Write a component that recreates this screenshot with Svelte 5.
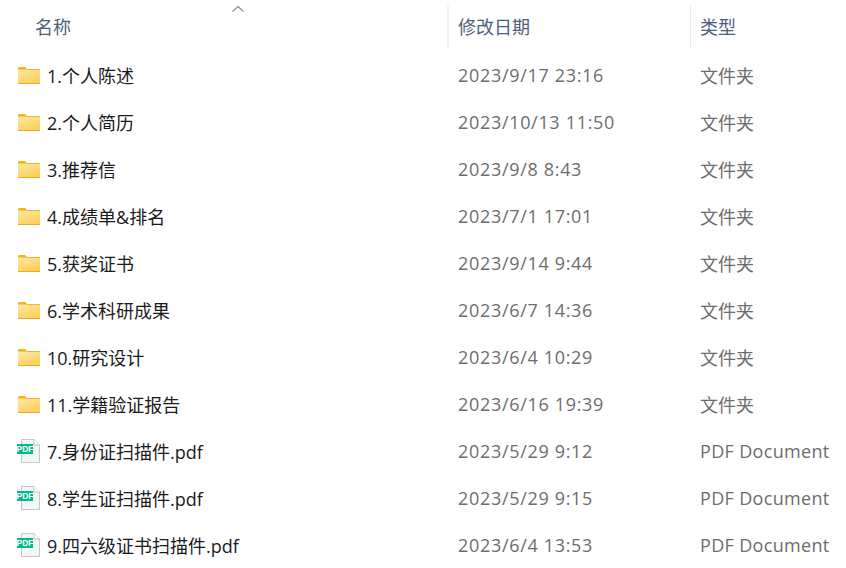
<script>
  const folder = '文件夹';
  const pdf = 'PDF Document';
  const rows = [
    { name: '1.个人陈述', date: '2023/9/17 23:16', type: folder },
    { name: '2.个人简历', date: '2023/10/13 11:50', type: folder },
    { name: '3.推荐信', date: '2023/9/8 8:43', type: folder },
    { name: '4.成绩单&排名', date: '2023/7/1 17:01', type: folder },
    { name: '5.获奖证书', date: '2023/9/14 9:44', type: folder },
    { name: '6.学术科研成果', date: '2023/6/7 14:36', type: folder },
    { name: '10.研究设计', date: '2023/6/4 10:29', type: folder },
    { name: '11.学籍验证报告', date: '2023/6/16 19:39', type: folder },
    { name: '7.身份证扫描件.pdf', date: '2023/5/29 9:12', type: pdf },
    { name: '8.学生证扫描件.pdf', date: '2023/5/29 9:15', type: pdf },
    { name: '9.四六级证书扫描件.pdf', date: '2023/6/4 13:53', type: pdf }
  ];
</script>

<div class="list">
  <div class="head">
    <div class="hname">
      <span>名称</span>
      <svg class="sort" width="14" height="8" viewBox="0 0 14 8"><path d="M1.5 6.5 7 1.5l5.5 5" fill="none" stroke="#8b8b8b" stroke-width="1.1"/></svg>
    </div>
    <div class="hdate">修改日期</div>
    <div class="htype">类型</div>
  </div>
  {#each rows as r}
    <div class="row">
      <div class="name">
        {#if r.type === folder}
          <svg class="ico" width="24" height="20" viewBox="0 0 24 20">
            <defs>
              <linearGradient id="fg" x1="0" y1="0" x2="0.6" y2="1">
                <stop offset="0" stop-color="#ffe9a6"/>
                <stop offset="1" stop-color="#fdcf5b"/>
              </linearGradient>
            </defs>
            <path d="M1 3.500C1 2.700 1.600 2 2.400 2H8l2.200 2H23v2H1z" fill="#f8b511"/>
            <rect x="1" y="4.600" width="22" height="13.400" fill="url(#fg)"/>
            <rect x="1" y="18" width="22" height="1" fill="#e9ab2e"/>
            <rect x="10" y="4" width="13" height="1" fill="#e7b53f"/>
          </svg>
        {:else}
          <svg class="ico" width="24" height="26" viewBox="0 0 24 26">
            <path d="M4.500 1.500H17l5.500 5.500v17.500H4.500z" fill="#f4f5f7" stroke="#c6c6c6"/>
            <path d="M17 1.500V7h5.500" fill="#fff" stroke="#c6c6c6"/>
            <rect x="0" y="6" width="16" height="10" fill="#00bb8b"/>
            <text x="8" y="14.200" text-anchor="middle" class="badge">PDF</text>
          </svg>
        {/if}
        <span class="label">{r.name}</span>
      </div>
      <div class="date">{r.date}</div>
      <div class="type" class:doc={r.type === pdf}>{r.type}</div>
    </div>
  {/each}
</div>

<style>
  :global(body) {
    margin: 0;
    background: #fff;
  }
  .list {
    width: 846px;
    height: 568px;
    overflow: hidden;
    font-family: "Open Sans", "Noto Sans CJK SC", sans-serif;
    font-size: 18px;
    box-sizing: border-box;
  }
  .head {
    display: grid;
    grid-template-columns: 447px 243px 1fr;
    height: 40px;
    margin-top: 6px;
    margin-bottom: 5px;
    color: #4c607a;
    line-height: 42px;
  }
  .hname {
    position: relative;
    padding-left: 35px;
  }
  .sort {
    position: absolute;
    left: 231px;
    top: -1px;
  }
  .hdate {
    border-left: 2px solid #f0f0f0;
    padding-left: 9px;
  }
  .htype {
    border-left: 1px solid #e8e8e8;
    padding-left: 9px;
  }
  .row {
    display: grid;
    grid-template-columns: 458px 242px 1fr;
    height: 47px;
    align-items: center;
  }
  .name {
    display: flex;
    align-items: center;
    color: #1a1a1a;
    position: relative;
  }
  .ico {
    position: absolute;
    left: 17px;
    top: 50%;
    transform: translateY(-50%);
  }
  .label {
    padding-left: 47px;
    white-space: nowrap;
  }
  .date, .type {
    color: #6d6d6d;
    white-space: nowrap;
  }
  .date {
    letter-spacing: 0.68px;
  }
  .doc {
    letter-spacing: 0.33px;
  }
  .badge {
    font-family: "Liberation Sans", sans-serif;
    font-size: 8.500px;
    font-weight: 700;
    fill: #fff;
  }
</style>
